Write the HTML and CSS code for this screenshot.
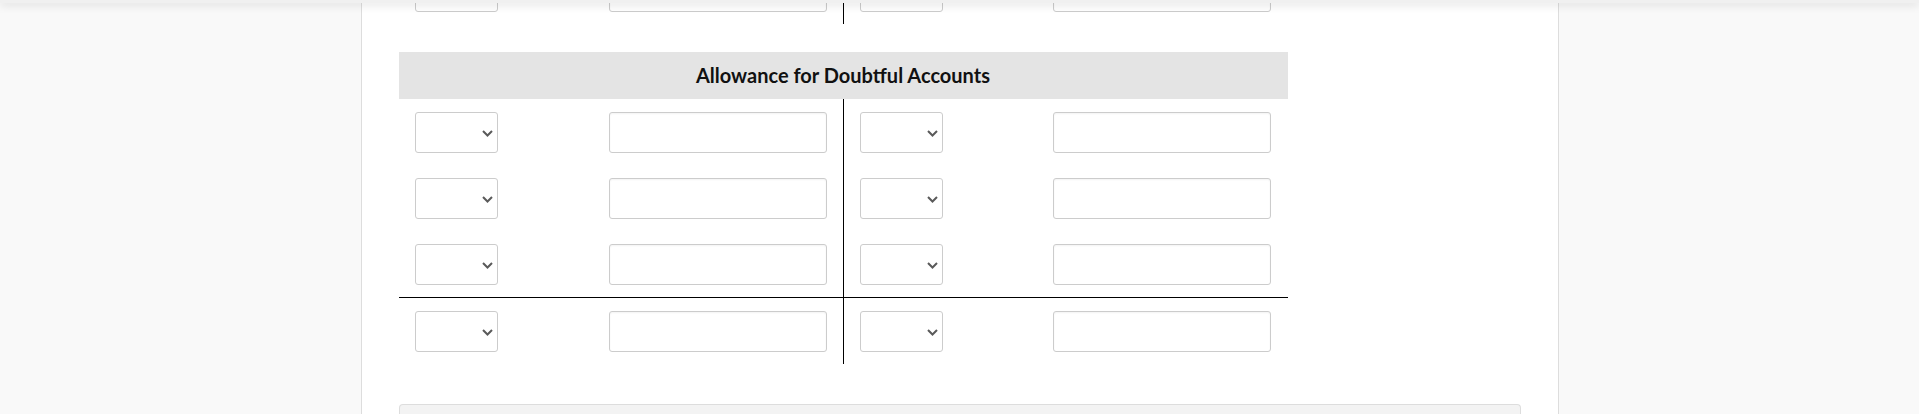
FILE: index.html
```html
<!DOCTYPE html>
<html>
<head>
  <title>Journal - T Accounts</title>
  <link rel="stylesheet" href="styles.css">
</head>
<body>
  <div class="topbar"></div>
  <div class="page">
    <div class="sheet">
      <!-- tail of the account above (scrolled out of view) -->
      <div class="t-account prev">
        <div class="t-row">
          <div class="side">
            <span class="pick"><select></select><svg class="chev" width="11" height="7" viewBox="0 0 11 7"><path d="M1 1l4.5 4.5 4.5-4.5" fill="none" stroke="#5a5a5a" stroke-width="2"/></svg></span>
            <input type="text" class="amount">
          </div>
          <div class="side">
            <span class="pick"><select></select><svg class="chev" width="11" height="7" viewBox="0 0 11 7"><path d="M1 1l4.5 4.5 4.5-4.5" fill="none" stroke="#5a5a5a" stroke-width="2"/></svg></span>
            <input type="text" class="amount">
          </div>
        </div>
      </div>

      <div class="t-account">
        <div class="t-title">Allowance for Doubtful Accounts</div>
        <div class="t-row">
          <div class="side">
            <span class="pick"><select></select><svg class="chev" width="11" height="7" viewBox="0 0 11 7"><path d="M1 1l4.5 4.5 4.5-4.5" fill="none" stroke="#5a5a5a" stroke-width="2"/></svg></span>
            <input type="text" class="amount">
          </div>
          <div class="side">
            <span class="pick"><select></select><svg class="chev" width="11" height="7" viewBox="0 0 11 7"><path d="M1 1l4.5 4.5 4.5-4.5" fill="none" stroke="#5a5a5a" stroke-width="2"/></svg></span>
            <input type="text" class="amount">
          </div>
        </div>
        <div class="t-row">
          <div class="side">
            <span class="pick"><select></select><svg class="chev" width="11" height="7" viewBox="0 0 11 7"><path d="M1 1l4.5 4.5 4.5-4.5" fill="none" stroke="#5a5a5a" stroke-width="2"/></svg></span>
            <input type="text" class="amount">
          </div>
          <div class="side">
            <span class="pick"><select></select><svg class="chev" width="11" height="7" viewBox="0 0 11 7"><path d="M1 1l4.5 4.5 4.5-4.5" fill="none" stroke="#5a5a5a" stroke-width="2"/></svg></span>
            <input type="text" class="amount">
          </div>
        </div>
        <div class="t-row">
          <div class="side">
            <span class="pick"><select></select><svg class="chev" width="11" height="7" viewBox="0 0 11 7"><path d="M1 1l4.5 4.5 4.5-4.5" fill="none" stroke="#5a5a5a" stroke-width="2"/></svg></span>
            <input type="text" class="amount">
          </div>
          <div class="side">
            <span class="pick"><select></select><svg class="chev" width="11" height="7" viewBox="0 0 11 7"><path d="M1 1l4.5 4.5 4.5-4.5" fill="none" stroke="#5a5a5a" stroke-width="2"/></svg></span>
            <input type="text" class="amount">
          </div>
        </div>
        <div class="t-row total">
          <div class="side">
            <span class="pick"><select></select><svg class="chev" width="11" height="7" viewBox="0 0 11 7"><path d="M1 1l4.5 4.5 4.5-4.5" fill="none" stroke="#5a5a5a" stroke-width="2"/></svg></span>
            <input type="text" class="amount">
          </div>
          <div class="side">
            <span class="pick"><select></select><svg class="chev" width="11" height="7" viewBox="0 0 11 7"><path d="M1 1l4.5 4.5 4.5-4.5" fill="none" stroke="#5a5a5a" stroke-width="2"/></svg></span>
            <input type="text" class="amount">
          </div>
        </div>
      </div>

      <div class="footer-box"></div>
    </div>
  </div>
</body>
</html>
```

FILE: styles.css
```css
body {
  margin: 0;
  font-family: Lato, "Liberation Sans", Arial, sans-serif;
  background-color: #f9f9f9;
  color: #111;
}

.topbar {
  position: fixed;
  top: 0;
  left: 0;
  right: 0;
  height: 3px;
  background-color: #f0f0f0;
  box-shadow: 0 1px 10px rgba(0, 0, 0, 0.22);
  z-index: 10;
}

.page {
  width: 1122px;
  min-height: 100vh;
  margin: 0 auto;
  padding: 0 37px;
  background-color: #fff;
  border-left: 1px solid #ddd;
  border-right: 1px solid #ddd;
}

.sheet {
  margin-top: -42px;
}

.t-account {
  width: 889px;
}

.prev {
  margin-bottom: 28px;
}

.t-title {
  height: 47px;
  line-height: 47px;
  text-align: center;
  font-size: 20px;
  font-weight: bold;
  background-color: #e4e4e4;
}

.t-row {
  display: flex;
}

.t-row.total {
  border-top: 1px solid #000;
}

.side {
  display: flex;
  justify-content: space-between;
  align-items: flex-start;
  width: 444px;
  height: 66px;
  padding: 13px 17px 0 16px;
  box-sizing: border-box;
}

.side:first-child {
  width: 445px;
  padding-right: 16px;
  border-right: 1px solid #000;
}

.pick {
  position: relative;
  display: block;
}

select {
  display: block;
  width: 83px;
  height: 41px;
  margin: 0;
  background: #fff;
  border: 1px solid #ccc;
  border-radius: 3px;
  -webkit-appearance: none;
  appearance: none;
}

.chev {
  position: absolute;
  right: 5px;
  top: 18px;
  pointer-events: none;
}

input.amount {
  display: block;
  width: 218px;
  height: 41px;
  margin: 0;
  padding: 0 8px;
  box-sizing: border-box;
  border: 1px solid #ccc;
  border-radius: 3px;
  box-shadow: inset 0 1px 2px rgba(0, 0, 0, 0.05);
}

.footer-box {
  margin-top: 40px;
  height: 120px;
  background-color: #f3f3f3;
  border: 1px solid #ddd;
  border-bottom: none;
  border-radius: 4px 4px 0 0;
}
```
